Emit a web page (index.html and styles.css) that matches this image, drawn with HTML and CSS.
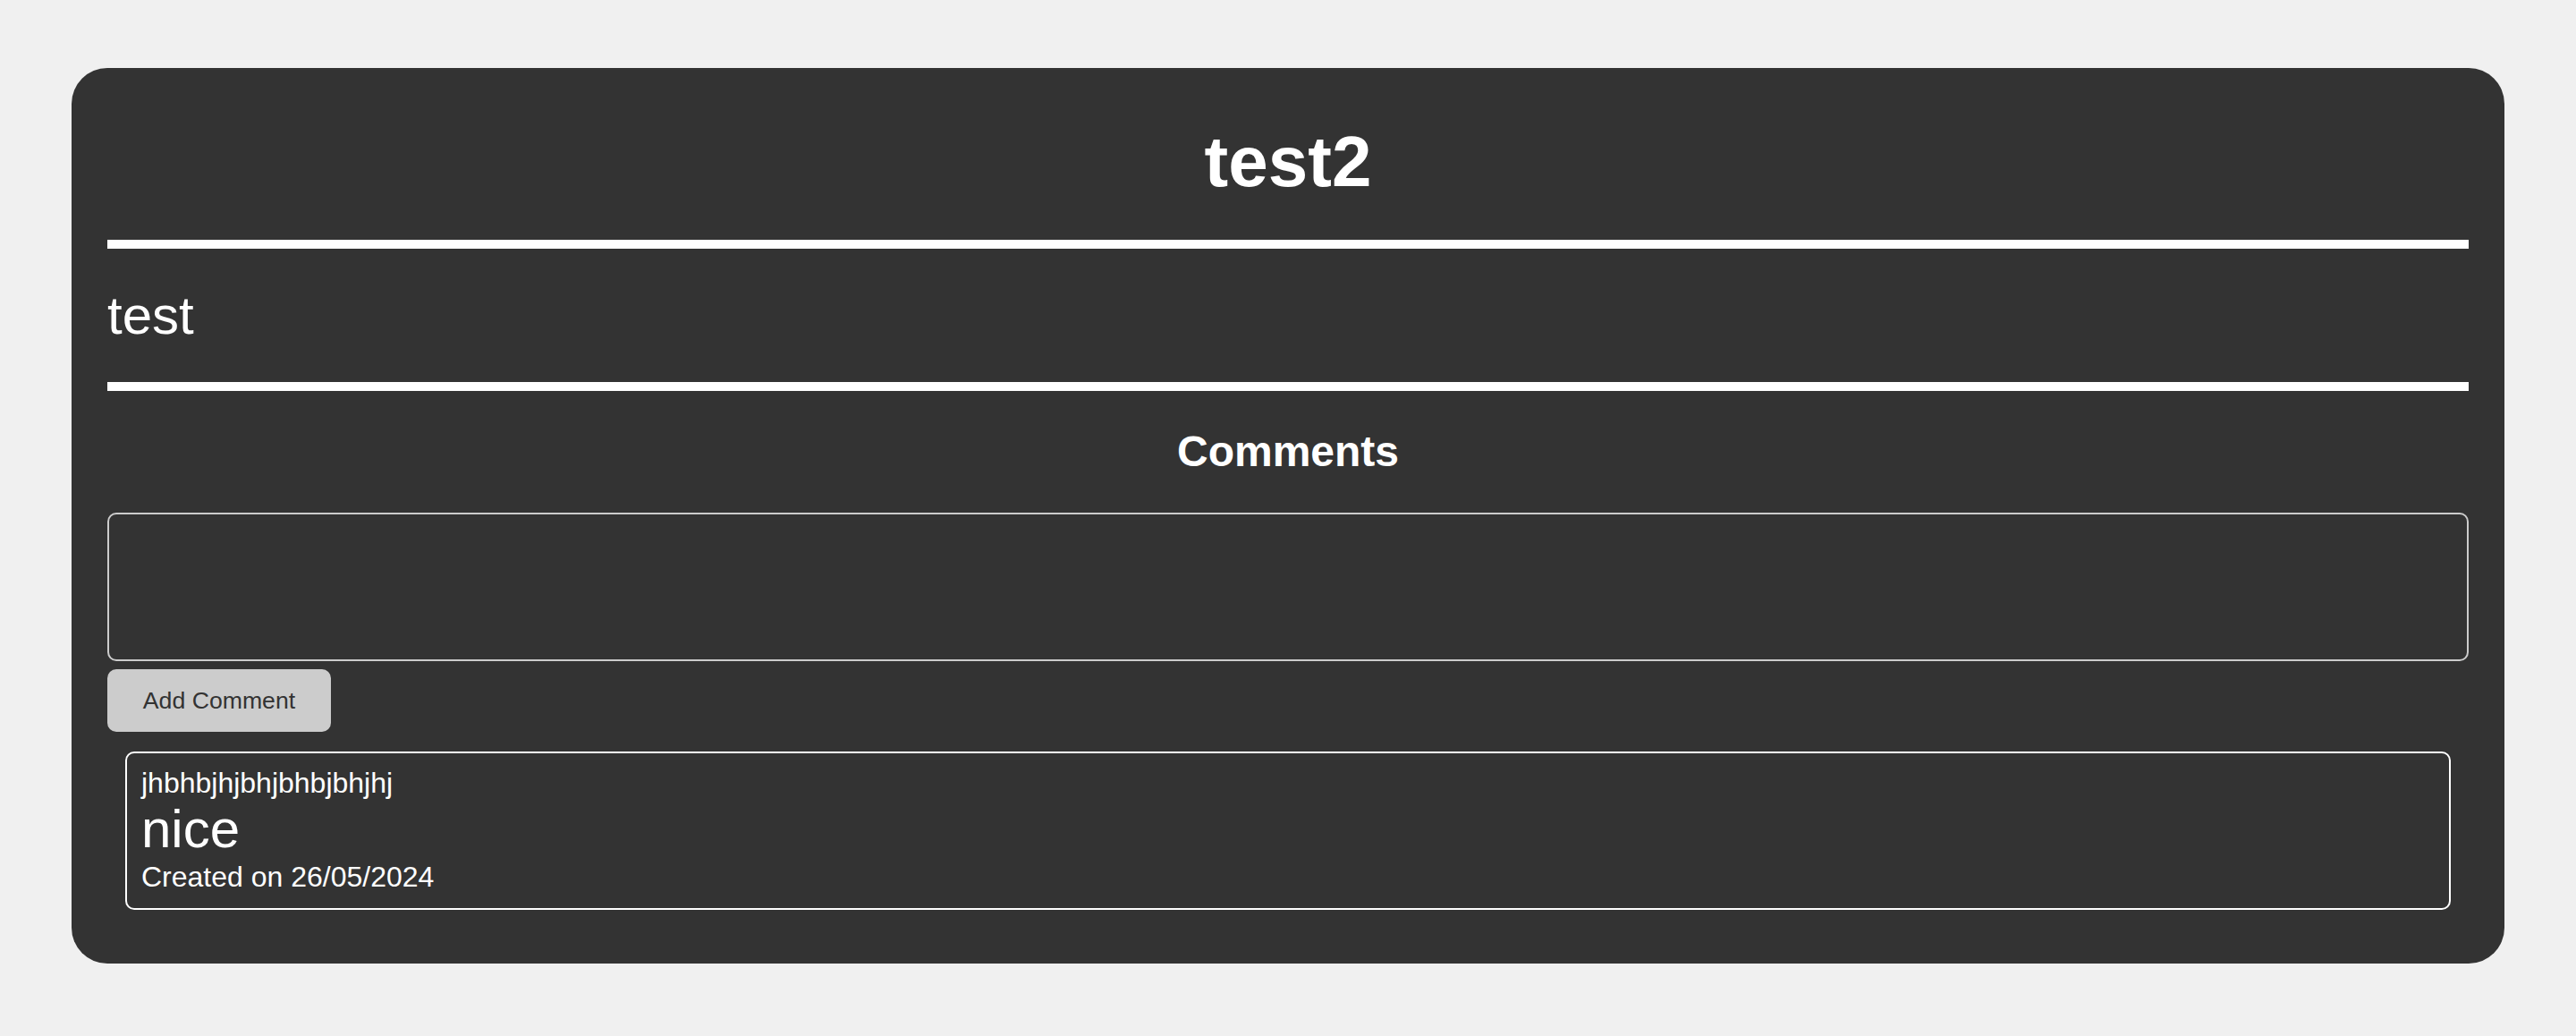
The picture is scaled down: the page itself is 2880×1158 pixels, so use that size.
FILE: index.html
```html
<!DOCTYPE html>
<html lang="en">
<head>
<meta charset="utf-8">
<title>test2</title>
<link rel="stylesheet" href="styles.css">
</head>
<body>
<main class="card">
  <h1 class="post-title">test2</h1>
  <hr class="rule">
  <p class="post-body">test</p>
  <hr class="rule rule-second">
  <h3 class="comments-title">Comments</h3>
  <textarea class="comment-input"></textarea>
  <button class="add-btn" type="button">Add Comment</button>
  <div class="comment">
    <div class="comment-author">jhbhbjhjbhjbhbjbhjhj</div>
    <div class="comment-text">nice</div>
    <div class="comment-date">Created on 26/05/2024</div>
  </div>
</main>
</body>
</html>
```
FILE: styles.css
```css
html, body {
  margin: 0;
  padding: 0;
}
body {
  background: #f0f0f0;
  font-family: "Liberation Sans", Arial, sans-serif;
  color: #ffffff;
  padding: 76px 80px 81px;
}
.card {
  background: #333333;
  border-radius: 40px;
  padding: 59px 40px 60px;
  display: flex;
  flex-direction: column;
}
.post-title {
  margin: 0;
  font-size: 80px;
  line-height: 92px;
  font-weight: bold;
  text-align: center;
}
.rule {
  margin: 41px 0 0;
  border: 0;
  height: 10px;
  background: #ffffff;
}
.rule-second {
  margin-top: 40px;
}
.post-body {
  margin: 40px 0 0;
  font-size: 60px;
  line-height: 69px;
}
.comments-title {
  margin: 41px 0 0;
  font-size: 48px;
  line-height: 54px;
  font-weight: bold;
  text-align: center;
}
.comment-input {
  margin: 41px 0 0;
  box-sizing: border-box;
  width: 100%;
  height: 166px;
  background: #333333;
  border: 2px solid #cccccc;
  border-radius: 10px;
  resize: none;
  color: #fff;
  font-family: inherit;
  display: block;
}
.add-btn {
  margin-top: 9px;
  align-self: flex-start;
  box-sizing: border-box;
  width: 250px;
  height: 70px;
  padding: 0;
  border: 0;
  border-radius: 10px;
  background: #cccccc;
  color: #333333;
  font-family: "Liberation Sans", Arial, sans-serif;
  font-size: 26.67px;
}
.comment {
  margin: 22px 20px 0;
  border: 2px solid #ffffff;
  border-radius: 10px;
  padding: 15px 16px;
}
.comment-author {
  font-size: 32px;
  line-height: 36px;
}
.comment-text {
  font-size: 60px;
  line-height: 68px;
}
.comment-date {
  font-size: 32px;
  line-height: 39px;
}
```
